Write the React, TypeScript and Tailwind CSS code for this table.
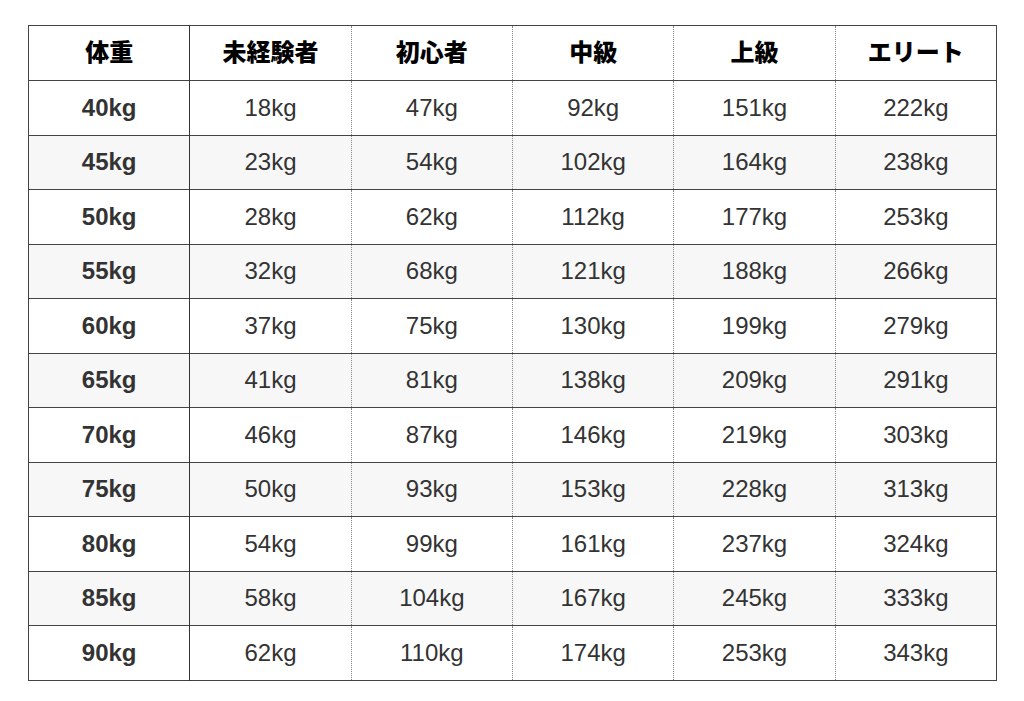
const HEADERS = ['体重', '未経験者', '初心者', '中級', '上級', 'エリート'];

const ROWS = [
  ['40kg', '18kg', '47kg', '92kg', '151kg', '222kg'],
  ['45kg', '23kg', '54kg', '102kg', '164kg', '238kg'],
  ['50kg', '28kg', '62kg', '112kg', '177kg', '253kg'],
  ['55kg', '32kg', '68kg', '121kg', '188kg', '266kg'],
  ['60kg', '37kg', '75kg', '130kg', '199kg', '279kg'],
  ['65kg', '41kg', '81kg', '138kg', '209kg', '291kg'],
  ['70kg', '46kg', '87kg', '146kg', '219kg', '303kg'],
  ['75kg', '50kg', '93kg', '153kg', '228kg', '313kg'],
  ['80kg', '54kg', '99kg', '161kg', '237kg', '324kg'],
  ['85kg', '58kg', '104kg', '167kg', '245kg', '333kg'],
  ['90kg', '62kg', '110kg', '174kg', '253kg', '343kg'],
];

function cellBorder(i: number) {
  // first column gets a solid divider, the rest are dotted
  if (i === 0) return 'border-r border-r-[#333]';
  if (i === 5) return '';
  return 'border-r border-dotted border-r-[#888]';
}

export default function App() {
  return (
    <div className="w-[1024px] h-[701px] bg-white pt-[25px] pl-[28px] font-['Liberation_Sans','Noto_Sans_CJK_JP',sans-serif]">
      <table className="w-[969px] table-fixed border-collapse border border-[#444]">
        <thead>
          <tr className="h-[55px] border-b border-[#444]">
            {HEADERS.map((h, i) => (
              <th key={h} className={`text-center text-[24px] font-black text-black ${cellBorder(i)}`}>
                {h}
              </th>
            ))}
          </tr>
        </thead>
        <tbody>
          {ROWS.map((row, r) => (
            <tr
              key={row[0]}
              className={`h-[54.5px] border-b border-[#444] ${r % 2 === 1 ? 'bg-[#f7f7f7]' : 'bg-white'}`}
            >
              {row.map((v, i) => (
                <td
                  key={i}
                  className={`text-center text-[24px] text-[#333] ${i === 0 ? 'font-bold' : ''} ${cellBorder(i)}`}
                >
                  {v}
                </td>
              ))}
            </tr>
          ))}
        </tbody>
      </table>
    </div>
  );
}
